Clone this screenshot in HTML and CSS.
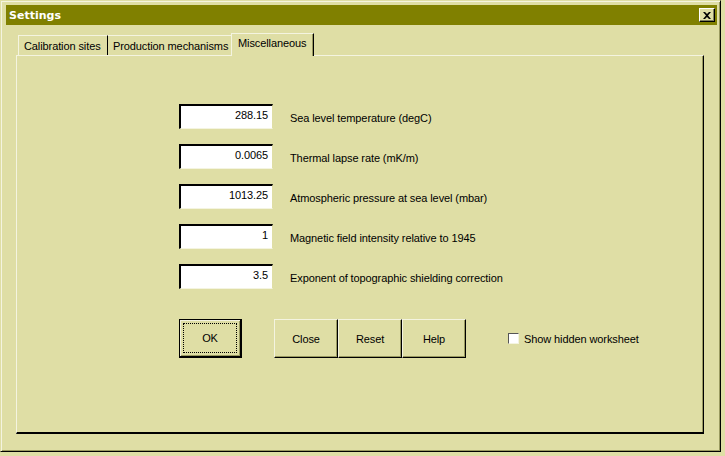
FILE: index.html
```html
<!DOCTYPE html>
<html>
<head>
<meta charset="utf-8">
<link rel="stylesheet" href="styles.css">
</head>
<body>
<div class="window">
  <div class="titlebar">
    <span class="title">Settings</span>
    <span class="closebtn"><svg width="8" height="7" viewBox="0 0 8 7"><path d="M0 0h2l2 2 2-2h2L5 3.5 8 7H6L4 5 2 7H0l3-3.5z" fill="#000"/></svg></span>
  </div>
  <div class="tabs">
    <div class="tab t1">Calibration sites</div>
    <div class="tab t2">Production mechanisms</div>
    <div class="tab t3 active">Miscellaneous</div>
  </div>
  <div class="panel">
    <div class="rows">
      <div class="row"><div class="field">288.15</div><span class="label">Sea level temperature (degC)</span></div>
      <div class="row"><div class="field">0.0065</div><span class="label">Thermal lapse rate (mK/m)</span></div>
      <div class="row"><div class="field">1013.25</div><span class="label">Atmospheric pressure at sea level (mbar)</span></div>
      <div class="row"><div class="field">1</div><span class="label">Magnetic field intensity relative to 1945</span></div>
      <div class="row"><div class="field">3.5</div><span class="label">Exponent of topographic shielding correction</span></div>
    </div>
    <div class="buttons">
      <div class="btn ok"><span class="focus">OK</span></div>
      <div class="group">
        <div class="btn">Close</div>
        <div class="btn">Reset</div>
        <div class="btn">Help</div>
      </div>
      <label class="check"><span class="box"></span>Show hidden worksheet</label>
    </div>
  </div>
</div>
</body>
</html>
```
FILE: styles.css
```css
html, body {
  margin: 0;
  padding: 0;
  background: #dfdea5;
}
body {
  width: 725px;
  height: 456px;
  overflow: hidden;
  font-family: "Liberation Sans", Arial, sans-serif;
  font-size: 11px;
  letter-spacing: -0.1px;
  color: #000;
}
.window {
  width: 721px;
  height: 452px;
  box-sizing: border-box;
  border-top: 1px solid #dfdea5;
  border-left: 1px solid #dfdea5;
  border-right: 1px solid #000;
  border-bottom: 1px solid #000;
  box-shadow: inset 1px 1px 0 #f4f4e0, inset -1px -1px 0 #9a9a60;
  padding: 4px 3px 4px 5px;
  display: flex;
  flex-direction: column;
  align-items: flex-start;
}
.titlebar {
  align-self: stretch;
  height: 20px;
  background: #808000;
  display: flex;
  align-items: center;
  justify-content: space-between;
  padding: 0 2px 0 3px;
}
.title {
  color: #fff;
  font-weight: bold;
  font-family: "DejaVu Sans", sans-serif;
  font-size: 11px;
  letter-spacing: 0;
}
.closebtn {
  width: 16px;
  height: 14px;
  box-sizing: border-box;
  background: #dfdea5;
  border-top: 1px solid #fff;
  border-left: 1px solid #fff;
  border-right: 1px solid #000;
  border-bottom: 1px solid #000;
  box-shadow: inset -1px -1px 0 #808060;
  display: flex;
  align-items: center;
  justify-content: center;
}
.tabs {
  display: flex;
  margin: 8px 0 0 10px;
  height: 22px;
  align-items: flex-end;
  position: relative;
  z-index: 1;
}
.tab {
  height: 20px;
  box-sizing: border-box;
  display: flex;
  align-items: center;
  border-top: 1px solid #f4f4e0;
  white-space: nowrap;
  overflow: hidden;
}
.t1 {
  width: 90px;
  margin-left: 2px;
  padding-left: 5px;
  border-left: 1px solid #f4f4e0;
  border-right: 1px solid #000;
}
.t2 {
  width: 123px;
  padding-left: 5px;
}
.tab.active {
  width: 83px;
  height: 23px;
  margin-bottom: -1px;
  background: #dfdea5;
  border-left: 1px solid #f4f4e0;
  border-right: 1px solid #000;
  box-shadow: inset -1px 0 0 #9a9a60;
  padding-left: 6px;
  align-items: flex-start;
  padding-top: 3px;
}
.panel {
  flex: none;
  width: 688px;
  height: 379px;
  margin-left: 10px;
  box-sizing: border-box;
  border-top: 1px solid #f4f4e0;
  border-left: 1px solid #f4f4e0;
  border-right: 1px solid #000;
  border-bottom: 2px solid #000;
  box-shadow: inset -1px 0 0 #9a9a60;
  padding: 48px 0 0 162px;
}
.rows {
  display: flex;
  flex-direction: column;
  gap: 15px;
}
.row {
  display: flex;
  align-items: center;
  height: 25px;
}
.field {
  width: 94px;
  height: 25px;
  box-sizing: border-box;
  background: #fff;
  border-top: 2px solid #000;
  border-left: 2px solid #000;
  border-right: 1px solid #dfdea5;
  border-bottom: 1px solid #f4f4e0;
  text-align: right;
  padding: 3px 4px 0 0;
}
.label {
  margin-left: 17px;
  padding-top: 3px;
}
.buttons {
  display: flex;
  align-items: center;
  margin-top: 30px;
}
.btn {
  width: 64px;
  height: 39px;
  box-sizing: border-box;
  border-top: 1px solid #f4f4e0;
  border-left: 1px solid #f4f4e0;
  border-right: 1px solid #000;
  border-bottom: 1px solid #000;
  box-shadow: inset -1px -1px 0 #9a9a60;
  display: flex;
  align-items: center;
  justify-content: center;
}
.btn.ok {
  width: 63px;
  border: 1px solid #000;
  border-right-width: 2px;
  border-bottom-width: 2px;
  box-shadow: inset 1px 1px 0 #f4f4e0, inset -1px -1px 0 #9a9a60;
  padding: 3px;
}
.focus {
  flex: 1;
  align-self: stretch;
  border: 1px dotted #000;
  display: flex;
  align-items: center;
  justify-content: center;
}
.group {
  display: flex;
  margin-left: 32px;
}
.check {
  display: flex;
  align-items: center;
  margin-left: 42px;
}
.box {
  width: 11px;
  height: 11px;
  box-sizing: border-box;
  background: #fff;
  border-top: 1px solid #555;
  border-left: 1px solid #555;
  border-right: 1px solid #f4f4e0;
  border-bottom: 1px solid #f4f4e0;
  margin-right: 5px;
}
```
